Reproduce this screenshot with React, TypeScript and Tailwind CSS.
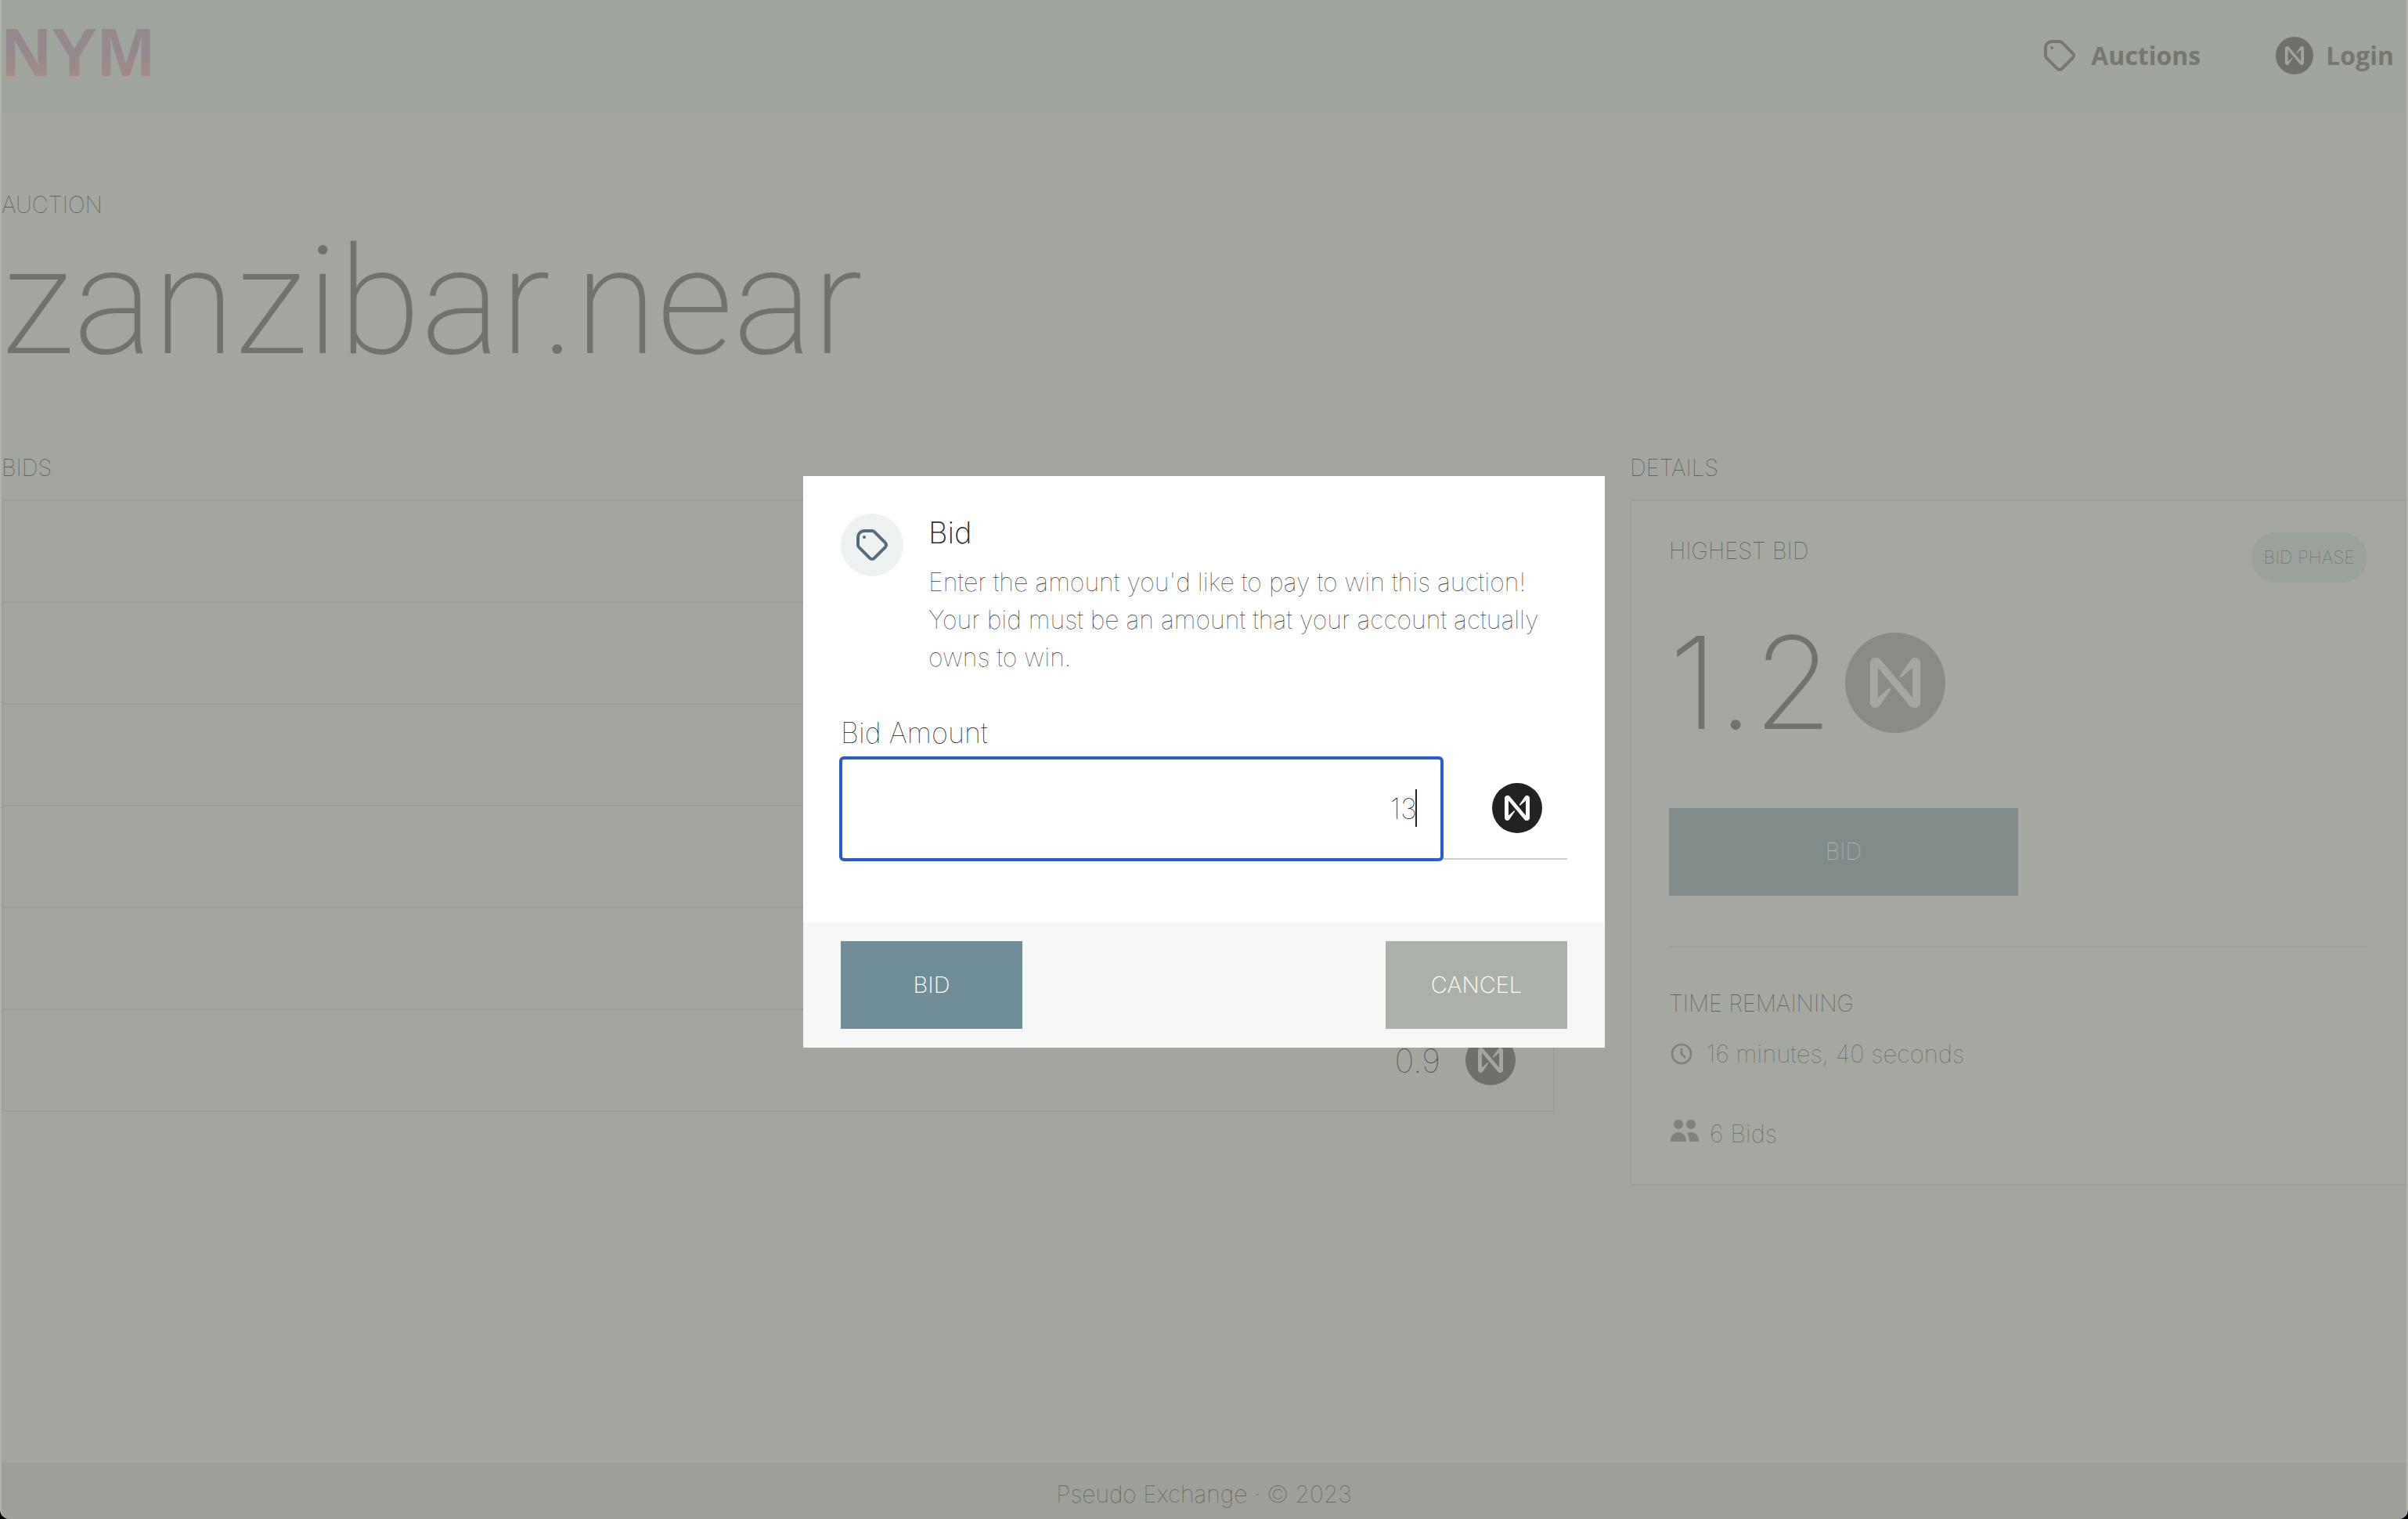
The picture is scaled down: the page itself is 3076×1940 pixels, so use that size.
import React, { useState } from "react";

function NearIcon({ className, glyph }: { className: string; glyph: string }) {
  return (
    <svg viewBox="-45 -45 180 180" className={className} aria-hidden="true">
      <circle cx="45" cy="45" r="90" fill="currentColor" />
      <path
        fill={glyph}
        d="M72.2,4.6L53.4,32.5c-1.3,1.9,1.2,4.2,3,2.6L74.9,19c0.5-0.4,1.2-0.1,1.2,0.6v50.3c0,0.7-0.9,1-1.3,0.5l-56-67C17,1.2,14.4,0,11.5,0h-2C4.3,0,0,4.3,0,9.6v70.8C0,85.7,4.3,90,9.6,90c3.3,0,6.4-1.7,8.2-4.6l18.8-27.9c1.3-1.9-1.2-4.2-3-2.6l-18.5,16c-0.5,0.4-1.2,0.1-1.2-0.6V20.1c0-0.7,0.9-1,1.3-0.5l56,67c1.8,2.2,4.5,3.4,7.3,3.4h2c5.3,0,9.6-4.3,9.6-9.6V9.6c0-5.3-4.3-9.6-9.6-9.6C77.1,0,74,1.7,72.2,4.6z"
      />
    </svg>
  );
}

function TagIcon({ className }: { className: string }) {
  return (
    <svg
      viewBox="0 0 24 24"
      className={className}
      fill="none"
      stroke="currentColor"
      strokeWidth="2"
      strokeLinecap="round"
      strokeLinejoin="round"
      aria-hidden="true"
    >
      <path d="M7 7h.01M7 3h5c.512 0 1.024.195 1.414.586l7 7a2 2 0 010 2.828l-7 7a2 2 0 01-2.828 0l-7-7A1.994 1.994 0 013 12V7a4 4 0 014-4z" />
    </svg>
  );
}

function ClockIcon({ className }: { className: string }) {
  return (
    <svg
      viewBox="0 0 24 24"
      className={className}
      fill="none"
      stroke="currentColor"
      strokeWidth="2"
      strokeLinecap="round"
      strokeLinejoin="round"
      aria-hidden="true"
    >
      <circle cx="12" cy="12" r="9" />
      <path d="M12 7.5V12l3.2 3.2" />
    </svg>
  );
}

function UsersIcon({ className }: { className: string }) {
  return (
    <svg viewBox="0 0 20 20" className={className} fill="currentColor" aria-hidden="true">
      <path d="M9 6a3 3 0 11-6 0 3 3 0 016 0zM17 6a3 3 0 11-6 0 3 3 0 016 0zM12.93 17c.046-.327.07-.66.07-1a6.97 6.97 0 00-1.5-4.33A5 5 0 0119 16v1h-6.07zM6 11a5 5 0 015 5v1H1v-1a5 5 0 015-5z" />
    </svg>
  );
}

function Header() {
  return (
    <header className="flex h-[142px] items-center justify-between bg-[#9fa49d] pr-4">
      <a
        href="#home"
        className="bg-linear-to-b from-[#95888f] from-45% to-[#a38b80] to-75% bg-clip-text pb-2 font-['Liberation_Sans',sans-serif] text-[88px] leading-[96px] font-bold text-transparent"
      >
        NYM
      </a>
      <nav className="flex items-center gap-24 font-['Open_Sans',sans-serif] text-[32px] leading-[48px] font-bold text-[#767770]">
        <a href="#auctions" className="flex items-center gap-4">
          <TagIcon className="size-12" />
          Auctions
        </a>
        <a href="#login" className="flex items-center gap-4">
          <NearIcon className="size-12 text-[#6e706a]" glyph="#9fa49d" />
          Login
        </a>
      </nav>
    </header>
  );
}

const rows = ["", "", "", "", "", "0.9"];

function Bids() {
  return (
    <section>
      <h2 className="text-[29px] leading-[48px] text-[#51534d]">BIDS</h2>
      <ul className="mt-4 divide-y-2 divide-[#9d9f98] border-2 border-[#9d9f98]">
        {rows.map((amount, i) => (
          <li key={i} className="flex h-[128px] items-center justify-end gap-8 px-12 text-[42px] text-[#51534d] not-last:h-[130px]">
            {amount && (
              <>
                {amount}
                <NearIcon className="size-16 text-[#6e706a]" glyph="#a3a59f" />
              </>
            )}
          </li>
        ))}
      </ul>
    </section>
  );
}

function Details() {
  return (
    <section>
      <h2 className="text-[29px] leading-[48px] text-[#51534d]">DETAILS</h2>
      <div className="mt-4 border-2 border-[#9d9f98] bg-[#a5a7a1] px-12 py-10">
        <div className="flex items-start justify-between">
          <h3 className="text-[29px] leading-[48px] text-[#51534d]">HIGHEST BID</h3>
          <span className="rounded-full bg-[#9ba29b] px-4 text-[23px] leading-[64px] text-[#5f6662]">BID PHASE</span>
        </div>
        <div className="mt-16 flex h-32 items-center gap-4">
          <span className="text-[164px] leading-[128px] font-extralight text-[#70726c]">1.2</span>
          <NearIcon className="size-32 text-[#898b85]" glyph="#a5a7a1" />
        </div>
        <button type="button" className="mt-24 block h-28 w-1/2 bg-[#818b89] text-[29px] text-[#bcc0bb]">
          BID
        </button>
        <hr className="mt-16 border-t-2 border-[#9d9f98]" />
        <h3 className="mt-12 text-[29px] leading-[48px] text-[#51534d]">TIME REMAINING</h3>
        <p className="mt-4 flex items-center gap-4 text-[31px] leading-[48px] text-[#666862]">
          <ClockIcon className="size-8 text-[#80827c]" />
          16 minutes, 40 seconds
        </p>
        <p className="mt-[54px] flex items-start gap-3 text-[31px] leading-[48px] text-[#666862]">
          <UsersIcon className="size-10 text-[#80827c]" />6 Bids
        </p>
      </div>
    </section>
  );
}

function BidDialog() {
  const [amount, setAmount] = useState("13");
  return (
    <div className="fixed inset-0 flex items-center justify-center pt-1.5">
      <form role="dialog" aria-labelledby="bid-title" className="w-full max-w-[1024px] bg-white">
        <div className="px-12 pt-12 pb-20">
          <div className="flex items-start gap-8">
            <span className="flex size-20 shrink-0 items-center justify-center rounded-full bg-[#eef2f3] text-[#576b7e]">
              <TagIcon className="size-12" />
            </span>
            <div>
              <h2 id="bid-title" className="text-[38px] leading-[48px] font-extralight text-[#2d2d2d]">
                Bid
              </h2>
              <p className="mt-4 text-[32px] leading-[48px] text-[#3c3d38]">
                Enter the amount you'd like to pay to win this auction! Your bid must be an amount that your account actually owns to win.
              </p>
            </div>
          </div>
          <label htmlFor="amount" className="mt-12 block text-[36px] leading-[48px] text-[#111111]">
            Bid Amount
          </label>
          <div className="mt-2 flex h-[130px] items-center border-b-2 border-[#cfd0ca] pr-8">
            <div className="relative -mb-0.5 h-[130px] flex-1">
              <input
                id="amount"
                value={amount}
                onChange={(e) => setAmount(e.target.value)}
                className="h-full w-full rounded-sm bg-white pr-8 text-right text-[36px] text-[#111111] caret-transparent outline-4 -outline-offset-2 outline-[#285cc8]"
              />
              <span className="absolute top-10 right-8 h-12 w-0.5 bg-[#222222]" />
            </div>
            <NearIcon className="ml-16 size-16 text-[#222222]" glyph="#ffffff" />
          </div>
        </div>
        <div className="flex justify-between bg-[#f5f7f6] px-12 py-6">
          <button type="button" className="h-28 w-[232px] bg-[#718d99] text-[29px] font-extralight text-white">
            BID
          </button>
          <button type="button" className="h-28 w-[232px] bg-[#abb0a9] text-[29px] font-extralight text-white">
            CANCEL
          </button>
        </div>
      </form>
    </div>
  );
}

export default function App() {
  return (
    <div className="bg-black font-['Inter',sans-serif] font-thin">
      <div className="flex min-h-screen flex-col overflow-hidden rounded-b-xl border-x-2 border-[#b1b3ad] bg-[#a3a59f]">
        <Header />
        <main className="flex-1 pt-24">
          <p className="text-[29px] leading-[48px] text-[#51534d]">AUCTION</p>
          <h1 className="mt-1 font-['Roboto',sans-serif] text-[191px] leading-[192px] font-extralight text-[#70726c]">zanzibar.near</h1>
          <div className="mt-23 grid grid-cols-[2fr_1fr] gap-24">
            <Bids />
            <Details />
          </div>
        </main>
        <footer className="bg-[#9d9f99] pt-4 pb-2 text-center text-[30px] leading-[48px] text-[#5c5e58]">
          Pseudo Exchange · © 2023
        </footer>
      </div>
      <BidDialog />
    </div>
  );
}
